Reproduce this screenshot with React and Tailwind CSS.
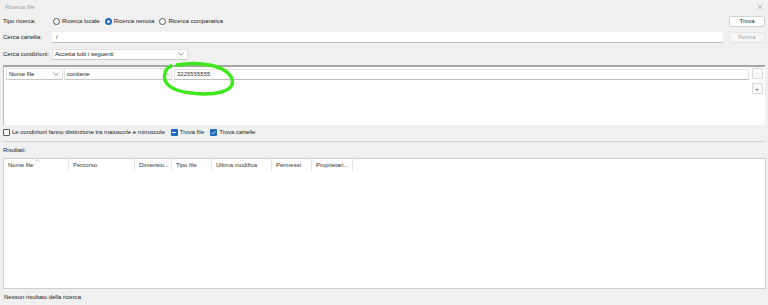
import React from "react";

const font = { fontFamily: '"Liberation Sans", Arial, sans-serif' };

function Radio({ checked, label }) {
  return (
    <div className="flex items-center gap-[2px]">
      <span
        className={
          "w-[7px] h-[7px] rounded-full flex items-center justify-center " +
          (checked ? "bg-[#1c6bbf]" : "border border-[#555] bg-white")
        }
      >
        {checked && <span className="w-[3px] h-[3px] rounded-full bg-white" />}
      </span>
      <span>{label}</span>
    </div>
  );
}

function Chevron() {
  return (
    <svg width="6" height="4" viewBox="0 0 6 4" className="shrink-0">
      <path d="M0.5 0.8 L3 3.2 L5.5 0.8" fill="none" stroke="#666" strokeWidth="0.7" />
    </svg>
  );
}

function Check({ kind }) {
  return (
    <span className="w-[7px] h-[7px] rounded-[1px] bg-[#1c6bbf] flex items-center justify-center">
      {kind === "dash" ? (
        <span className="w-[4px] h-[1px] bg-white" />
      ) : (
        <svg width="5" height="5" viewBox="0 0 5 5">
          <path d="M0.8 2.6 L2 3.8 L4.3 1.2" fill="none" stroke="#fff" strokeWidth="0.8" />
        </svg>
      )}
    </span>
  );
}

const cols = [
  ["Nome file", 65],
  ["Percorso", 66],
  ["Dimensio...", 37],
  ["Tipo file", 40],
  ["Ultima modifica", 60],
  ["Permessi", 40],
  ["Proprietari...", 41],
];

export default function App() {
  return (
    <div
      className="relative w-[768px] h-[305px] bg-[#f0f0f0] text-[#1a1a1a] text-[6px] leading-none flex flex-col overflow-hidden whitespace-nowrap"
      style={font}
    >
      {/* title */}
      <div className="h-[12px] flex items-center justify-between pl-[5px] pr-[5px] pt-[1px]">
        <span className="text-[#a0a0a0]">Ricerca file</span>
        <svg width="6" height="6" viewBox="0 0 6 6">
          <path d="M0.5 0.5 L5.5 5.5 M5.5 0.5 L0.5 5.5" stroke="#999" strokeWidth="0.6" />
        </svg>
      </div>

      {/* tipo ricerca */}
      <div className="h-[12px] mt-[3px] flex items-center pl-[3px] pr-[3px]">
        <span className="w-[50px]">Tipo ricerca:</span>
        <div className="flex items-center gap-[5px]">
          <Radio label="Ricerca locale" />
          <Radio checked label="Ricerca remota" />
          <Radio label="Ricerca comparativa" />
        </div>
        <div className="flex-1" />
        <div className="w-[36px] h-[11px] bg-white border border-[#d0d0d0] rounded-[2px] flex items-center justify-center">
          Trova
        </div>
      </div>

      {/* cerca cartella */}
      <div className="h-[12px] mt-[4px] flex items-center pl-[3px] pr-[3px]">
        <span className="w-[49px]">Cerca cartella:</span>
        <div className="flex-1 h-[11px] bg-white border-b border-[#bdbdbd] flex items-center pl-[4px]">
          /
        </div>
        <div className="w-[36px] h-[11px] ml-[6px] bg-[#f6f6f6] border border-[#e4e4e4] rounded-[2px] flex items-center justify-center text-[#a8a8a8]">
          Ferma
        </div>
      </div>

      {/* cerca condizioni */}
      <div className="h-[12px] mt-[5px] flex items-center pl-[3px]">
        <span className="w-[49px]">Cerca condizioni:</span>
        <div className="w-[136px] h-[11px] bg-white border border-[#e0e0e0] border-b-[#c8c8c8] rounded-[1px] flex items-center justify-between pl-[2px] pr-[3px]">
          <span>Accetta tutti i seguenti</span>
          <Chevron />
        </div>
      </div>

      {/* conditions panel */}
      <div className="mt-[5px] mx-[3px] h-[60px] bg-white border-t-[2px] border-t-[#a6a6a6] border-l border-l-[#bdbdbd] flex">
        <div className="flex-1 flex flex-col pt-[1px] pl-[2px]">
          <div className="flex items-center h-[12px] gap-[1px]">
            <div className="w-[57px] h-[12px] bg-white border border-[#e2e2e2] border-b-[#c8c8c8] rounded-[1px] flex items-center justify-between pl-[2px] pr-[3px]">
              <span>Nome file</span>
              <Chevron />
            </div>
            <div className="w-[108px] h-[12px] bg-white border border-[#e2e2e2] border-b-[#c8c8c8] rounded-[1px] flex items-center justify-between pl-[2px] pr-[1px]">
              <span>contiene</span>
              <svg width="4" height="3" viewBox="0 0 4 3">
                <path d="M0.3 0.5 L2 2.5 L3.7 0.5" fill="none" stroke="#888" strokeWidth="0.6" />
              </svg>
            </div>
            <div className="flex-1 h-[11px] ml-[1px] bg-white border border-[#e4e4e4] border-b-[#bdbdbd] flex items-center pl-[2px] text-[#333]">
              3225555555
            </div>
          </div>
        </div>
        <div className="w-[16px] flex flex-col items-center pt-[1px] gap-[4px]">
          <div className="w-[11px] h-[11px] bg-[#fafafa] border border-[#d8d8d8] rounded-[1px] flex items-center justify-center text-[#888] text-[5px]">
            -
          </div>
          <div className="w-[11px] h-[11px] bg-[#fafafa] border border-[#d8d8d8] rounded-[1px] flex items-center justify-center text-[#444] text-[6px]">
            +
          </div>
        </div>
      </div>

      {/* options */}
      <div className="h-[12px] mt-[1px] flex items-center pl-[3px] gap-[6px]">
        <div className="flex items-center gap-[2px]">
          <span className="w-[7px] h-[7px] rounded-[1px] border border-[#555] bg-white" />
          <span>Le condizioni fanno distinzione tra maiuscole e minuscole</span>
        </div>
        <div className="flex items-center gap-[2px]">
          <Check kind="dash" />
          <span>Trova file</span>
        </div>
        <div className="flex items-center gap-[2px]">
          <Check />
          <span>Trova cartelle</span>
        </div>
      </div>

      <div className="mt-[3px] mx-[3px] h-[1px] bg-[#d4d4d4]" />

      <div className="h-[10px] mt-[3px] flex items-center pl-[3px]">Risultati:</div>

      {/* results */}
      <div className="mt-[3px] mx-[3px] mr-[2px] h-[131px] bg-white border border-[#d0d0d0] flex flex-col">
        <div className="h-[12px] flex relative">
          {cols.map(([name, w]) => (
            <div
              key={name}
              className="h-[12px] border-r border-[#e5e5e5] flex items-center pl-[4px] text-[#333]"
              style={{ width: w }}
            >
              {name}
            </div>
          ))}
          <svg className="absolute left-[31px] top-0" width="5" height="3" viewBox="0 0 5 3">
            <path d="M0.5 2.5 L2.5 0.5 L4.5 2.5" fill="none" stroke="#999" strokeWidth="0.6" />
          </svg>
        </div>
      </div>

      <div className="flex-1 flex items-center pl-[4px] pb-[1px]">Nessun risultato della ricerca</div>

      {/* green hand-drawn ellipse annotation */}
      <svg
        className="absolute left-0 top-0 pointer-events-none"
        width="768"
        height="305"
        viewBox="0 0 768 305"
      >
        <path
          d="M177 65 C198 61 227 65 232 79 C236 92 213 96 191 93 C171 91 162 83 165 73 C166 69 168 67 171 66"
          fill="none"
          stroke="#3fe81c"
          strokeWidth="3.5"
          strokeLinecap="round"
        />
      </svg>
    </div>
  );
}
